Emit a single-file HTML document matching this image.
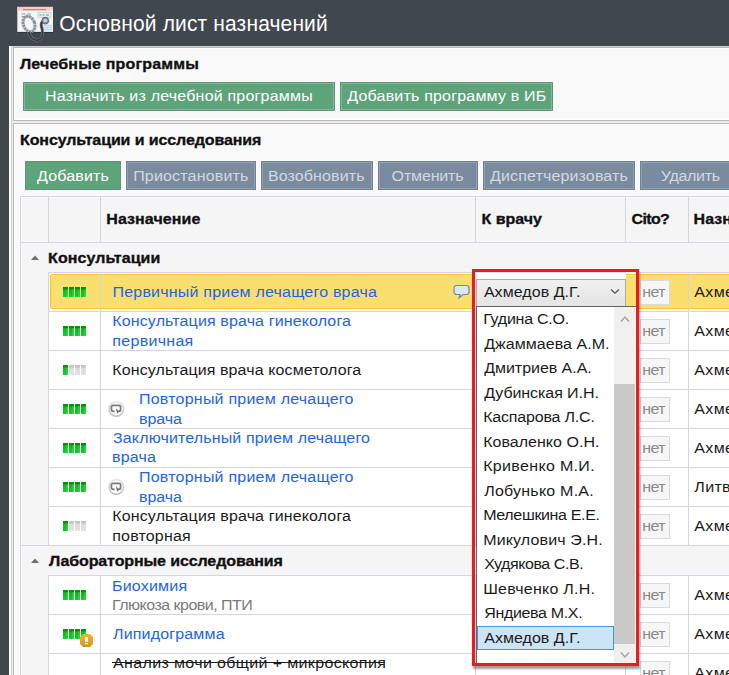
<!DOCTYPE html>
<html><head><meta charset="utf-8">
<style>
*{box-sizing:border-box;margin:0;padding:0}
html,body{width:729px;height:675px;overflow:hidden}
body{background:#41474e;position:relative;font-family:"Liberation Sans",sans-serif}
.a{position:absolute}
.t{position:absolute;white-space:nowrap;line-height:20px;font-family:"Liberation Sans",sans-serif;transform:scaleY(0.92);transform-origin:0 15px}
.btn{position:absolute;height:29px;box-shadow:0 0 0 1px #fff}
.g{background:#5fa37b;border:1px solid #579a72;outline:1px solid #fff;outline-offset:0}
.g::after,.s::after{content:"";position:absolute;left:0;top:0;right:0;bottom:0;border:1px solid #80b898}
.ni::after{display:none}
.s{background:#7a8ba0;border:1px solid #6f8098}
.s::after{border-color:#909fb2}
.hl{position:absolute;height:1px;background:#d5d5e1}
.vl{position:absolute;width:1px;background:#d5d5e1}
.bars{position:absolute;width:23px;height:10px}
.bar{position:absolute;top:0;width:5px;height:10px}
.on{background:linear-gradient(#078f0d 0,#078f0d 2px,#0dbb1d 3px,#0dd02a 100%)}
.on::after{content:"";position:absolute;right:0;top:2px;width:2px;height:8px;background:rgba(255,255,255,.12)}
.off{background:linear-gradient(#c4c4c4 0,#c4c4c4 2px,#dcdcdc 3px,#e2e2e2 100%)}
.net{position:absolute;left:640px;width:30px;height:25px;background:#f6f6f6;border:1px solid #dadada}
</style></head><body>

<!-- title icon -->
<svg class="a" style="left:14px;top:4px" width="42" height="40" viewBox="0 0 42 40">
  <rect x="3.3" y="27.5" width="35.7" height="1.6" fill="#2a2f34" opacity="0.7"/>
  <rect x="3.3" y="2.9" width="35.7" height="25" fill="#f2f4f6"/>
  <rect x="3.3" y="2.9" width="35.7" height="3.8" fill="#f8cbc6"/>
  <rect x="9" y="5.2" width="23" height="1" fill="#b07a72"/>
  <rect x="24" y="8.3" width="13" height="5" fill="#eceef0" stroke="#c2c6ca" stroke-width="0.7"/>
  <path d="M25.5 11 h2 M28.5 11 h2 M32 11 h3" stroke="#6a7076" stroke-width="0.8"/>
  <path d="M7.5 10 h4 M13 10 h4 M7.5 12.5 h9" stroke="#8f959b" stroke-width="0.9"/>
  <rect x="28" y="20.7" width="10" height="5.8" fill="#c4d8ec"/>
  <path d="M28.5 22.5 h9 M28.5 24.5 h9" stroke="#e8f0f8" stroke-width="0.7"/>
  <ellipse cx="15" cy="20" rx="5.6" ry="8" transform="rotate(-22 15 20)" fill="none" stroke="#8a939b" stroke-width="3" stroke-dasharray="2.4 0.5"/>
  <path d="M14.8 28 C16 35, 22 37.5, 25.5 35.5 C30 33.5, 28.5 25.5, 27.2 21.5 C27 19, 28.8 17.2, 31 16.8" fill="none" stroke="#6c7277" stroke-width="3"/><path d="M14.8 28 C16 35, 22 37.5, 25.5 35.5 C30 33.5, 28.5 25.5, 27.2 21.5 C27 19, 28.8 17.2, 31 16.8" fill="none" stroke="#33383d" stroke-width="1.6"/>
  <circle cx="31.3" cy="16.6" r="3.4" fill="#8c98a3" stroke="#505961" stroke-width="0.9"/>
  <circle cx="31.3" cy="16.6" r="1.5" fill="#d0dae3"/>
</svg>

<!-- frame -->
<div class="a" style="left:9px;top:46px;width:720px;height:629px;background:#f9f9f9"></div>
<div class="a" style="left:9px;top:46px;width:2px;height:629px;background:#fdfdfd"></div>
<div class="a" style="left:11px;top:46px;width:718px;height:1px;background:#d2d3d5"></div>
<div class="a" style="left:11px;top:46px;width:1px;height:629px;background:#d2d2d2"></div>
<div class="a" style="left:12px;top:47px;width:1px;height:628px;background:#eaeaea"></div>
<!-- section 1 -->
<div class="a" style="left:13px;top:47px;width:720px;height:74px;border:1px solid #b8b8b8;border-right:none;background:#f9f9f9;box-shadow:inset 1px 1px 0 #fff,inset 0 -1px 0 #fdfdfd"></div>
<div class="a" style="left:13px;top:121px;width:716px;height:2px;background:#ececec"></div>
<!-- section 2 -->
<div class="a" style="left:13px;top:123px;width:720px;height:560px;border:1px solid #b8b8b8;border-right:none;background:#f9f9f9;box-shadow:inset 1px 1px 0 #fff"></div>

<!-- buttons -->
<div class="btn g" style="left:23px;top:82px;width:312px"></div>
<div class="btn g" style="left:340px;top:82px;width:213px"></div>
<div class="btn g ni" style="left:25px;top:161px;width:96px"></div>
<div class="btn s" style="left:126px;top:161px;width:130px"></div>
<div class="btn s" style="left:261px;top:161px;width:112px"></div>
<div class="btn s" style="left:378px;top:161px;width:100px"></div>
<div class="btn s" style="left:483px;top:161px;width:152px"></div>
<div class="btn s" style="left:640px;top:161px;width:100px"></div>

<!-- table -->
<div class="a" style="left:19px;top:195px;width:710px;height:480px;background:#fff"></div>
<div class="a" style="left:21px;top:197px;width:708px;height:478px;background:#f5f5f5;box-shadow:inset 1px 1px 0 #fcfcfc"></div>
<div class="hl" style="left:20px;top:196px;width:709px"></div>
<div class="vl" style="left:20px;top:196px;height:479px"></div>
<div class="hl" style="left:20px;top:242px;width:709px"></div>
<div class="vl" style="left:48px;top:196px;height:46px"></div>
<div class="vl" style="left:100px;top:196px;height:46px"></div>
<div class="vl" style="left:475px;top:196px;height:46px"></div>
<div class="vl" style="left:625px;top:196px;height:46px"></div>
<div class="vl" style="left:688px;top:196px;height:46px"></div>

<!-- data rows group 1 -->
<div class="a" style="left:49px;top:273px;width:680px;height:272px;background:#fff"></div>
<div class="hl" style="left:48px;top:272px;width:681px"></div>
<div class="hl" style="left:48px;top:311px;width:681px"></div>
<div class="hl" style="left:48px;top:350px;width:681px"></div>
<div class="hl" style="left:48px;top:389px;width:681px"></div>
<div class="hl" style="left:48px;top:428px;width:681px"></div>
<div class="hl" style="left:48px;top:467px;width:681px"></div>
<div class="hl" style="left:48px;top:506px;width:681px"></div>
<div class="hl" style="left:20px;top:545px;width:709px"></div>
<div class="vl" style="left:48px;top:272px;height:273px"></div>
<!-- group 2 -->
<div class="a" style="left:49px;top:576px;width:680px;height:99px;background:#fff"></div>
<div class="hl" style="left:48px;top:575px;width:681px"></div>
<div class="hl" style="left:48px;top:614px;width:681px"></div>
<div class="hl" style="left:48px;top:653px;width:681px"></div>
<div class="vl" style="left:48px;top:575px;height:100px"></div>

<!-- selected row -->
<div class="a" style="left:50px;top:274px;width:700px;height:35px;background:#f9e06e;border:1px solid #fbc52a;border-radius:2px;box-shadow:inset 0 1px 0 #fae68c,inset 0 -1px 0 #fae68c"></div>

<!-- column lines in data rows -->
<div class="vl" style="left:100px;top:272px;height:273px"></div>
<div class="vl" style="left:475px;top:272px;height:273px"></div>
<div class="vl" style="left:625px;top:272px;height:273px"></div>
<div class="vl" style="left:688px;top:272px;height:273px"></div>
<div class="vl" style="left:100px;top:575px;height:100px"></div>
<div class="vl" style="left:475px;top:575px;height:100px"></div>
<div class="vl" style="left:625px;top:575px;height:100px"></div>
<div class="vl" style="left:688px;top:575px;height:100px"></div>

<!-- group triangles -->
<svg class="a" style="left:31px;top:255px" width="8" height="5"><path d="M0 5 L4 0.5 L8 5 Z" fill="#6e6e6e"/></svg>
<svg class="a" style="left:31px;top:558px" width="8" height="5"><path d="M0 5 L4 0.5 L8 5 Z" fill="#6e6e6e"/></svg>

<div class="bars" style="left:63px;top:287px"><div class="bar on" style="left:0px"></div><div class="bar on" style="left:6px"></div><div class="bar on" style="left:12px"></div><div class="bar on" style="left:18px"></div></div>
<div class="bars" style="left:63px;top:326px"><div class="bar on" style="left:0px"></div><div class="bar on" style="left:6px"></div><div class="bar on" style="left:12px"></div><div class="bar on" style="left:18px"></div></div>
<div class="bars" style="left:63px;top:365px"><div class="bar on" style="left:0px"></div><div class="bar off" style="left:6px"></div><div class="bar off" style="left:12px"></div><div class="bar off" style="left:18px"></div></div>
<div class="bars" style="left:63px;top:404px"><div class="bar on" style="left:0px"></div><div class="bar on" style="left:6px"></div><div class="bar on" style="left:12px"></div><div class="bar on" style="left:18px"></div></div>
<div class="bars" style="left:63px;top:443px"><div class="bar on" style="left:0px"></div><div class="bar on" style="left:6px"></div><div class="bar on" style="left:12px"></div><div class="bar on" style="left:18px"></div></div>
<div class="bars" style="left:63px;top:482px"><div class="bar on" style="left:0px"></div><div class="bar on" style="left:6px"></div><div class="bar on" style="left:12px"></div><div class="bar on" style="left:18px"></div></div>
<div class="bars" style="left:63px;top:521px"><div class="bar on" style="left:0px"></div><div class="bar off" style="left:6px"></div><div class="bar off" style="left:12px"></div><div class="bar off" style="left:18px"></div></div>
<div class="bars" style="left:63px;top:590px"><div class="bar on" style="left:0px"></div><div class="bar on" style="left:6px"></div><div class="bar on" style="left:12px"></div><div class="bar on" style="left:18px"></div></div>
<div class="bars" style="left:63px;top:629px"><div class="bar on" style="left:0px"></div><div class="bar on" style="left:6px"></div><div class="bar on" style="left:12px"></div><div class="bar on" style="left:18px"></div></div>

<!-- row icons -->

<svg class="a" style="left:107px;top:399px" width="18" height="19" viewBox="0 0 18 19"><defs><linearGradient id="rg399" x1="0" y1="0" x2="0" y2="1"><stop offset="0" stop-color="#e2e2e2"/><stop offset="1" stop-color="#bdbdbd"/></linearGradient></defs><circle cx="9.3" cy="10" r="8" fill="url(#rg399)"/><circle cx="9.3" cy="9.8" r="6.6" fill="#fbfbfb"/><path d="M7.6 12.3 H6.1 a1.7 1.7 0 0 1 -1.7 -1.7 V8 a1.7 1.7 0 0 1 1.7 -1.7 H11.9 a1.7 1.7 0 0 1 1.7 1.7 V10.6 a1.7 1.7 0 0 1 -1.7 1.7 H11.6" fill="none" stroke="#7d7d7d" stroke-width="1.8"/><path d="M8.8 9.2 L12.6 12.6 L10.2 14.6 Z" fill="#6f6f6f"/></svg>
<svg class="a" style="left:107px;top:477px" width="18" height="19" viewBox="0 0 18 19"><defs><linearGradient id="rg477" x1="0" y1="0" x2="0" y2="1"><stop offset="0" stop-color="#e2e2e2"/><stop offset="1" stop-color="#bdbdbd"/></linearGradient></defs><circle cx="9.3" cy="10" r="8" fill="url(#rg477)"/><circle cx="9.3" cy="9.8" r="6.6" fill="#fbfbfb"/><path d="M7.6 12.3 H6.1 a1.7 1.7 0 0 1 -1.7 -1.7 V8 a1.7 1.7 0 0 1 1.7 -1.7 H11.9 a1.7 1.7 0 0 1 1.7 1.7 V10.6 a1.7 1.7 0 0 1 -1.7 1.7 H11.6" fill="none" stroke="#7d7d7d" stroke-width="1.8"/><path d="M8.8 9.2 L12.6 12.6 L10.2 14.6 Z" fill="#6f6f6f"/></svg>
<svg class="a" style="left:453px;top:284px" width="17" height="15" viewBox="0 0 17 15"><path d="M3.5 1.5 h10 a2.5 2.5 0 0 1 2.5 2.5 v4 a2.5 2.5 0 0 1 -2.5 2.5 h-3.5 l-4 3.5 l1 -3.5 h-3.5 a2.5 2.5 0 0 1 -2.5 -2.5 v-4 a2.5 2.5 0 0 1 2.5 -2.5z" fill="#dbe7f7" stroke="#6b8bb5" stroke-width="1.2"/></svg>
<svg class="a" style="left:80px;top:634px" width="13" height="13" viewBox="0 0 13 13"><defs><linearGradient id="bg1" x1="0" y1="0" x2="0" y2="1"><stop offset="0" stop-color="#f7b52c"/><stop offset="1" stop-color="#d3941d"/></linearGradient></defs><path d="M3 0 H10 L13 3 V10 L10 13 H3 L0 10 V3Z" fill="url(#bg1)"/><rect x="5" y="3" width="3" height="4.8" fill="#fff"/><rect x="5" y="9" width="3" height="1.2" fill="#fff"/></svg>


<!-- net boxes -->
<div class="net" style="top:280px"></div>
<div class="net" style="top:319px"></div>
<div class="net" style="top:358px"></div>
<div class="net" style="top:397px"></div>
<div class="net" style="top:436px"></div>
<div class="net" style="top:475px"></div>
<div class="net" style="top:514px"></div>
<div class="net" style="top:583px"></div>
<div class="net" style="top:622px"></div>
<div class="net" style="top:661px"></div>

<!-- red box + combobox -->
<div class="a" style="left:472px;top:269px;width:167px;height:397px;border:3px solid #ec1a22;box-shadow:1px 3px 2px rgba(0,0,0,.38)"></div>
<div class="a" style="left:475px;top:272px;width:151px;height:34px;background:#fff;box-shadow:inset 1px 1px 0 #d6e6f2"></div>
<div class="a" style="left:626px;top:272px;width:10px;height:2px;background:#fff"></div>
<div class="a" style="left:476px;top:279px;width:150px;height:27px;border:1px solid #acacac;border-bottom:none;background:linear-gradient(#f0f0f0,#e4e4e4)"></div>
<svg class="a" style="left:610px;top:288px" width="10" height="7"><path d="M1 1.5 L5 5.2 L9 1.5" fill="none" stroke="#555" stroke-width="1.3"/></svg>
<div class="a" style="left:476px;top:306px;width:160px;height:357px;background:#fff;border-left:1px solid #646464;border-top:1px solid #646464"></div>
<div class="a" style="left:614px;top:307px;width:21px;height:356px;background:#f0f0f0"></div>
<div class="a" style="left:614px;top:384px;width:21px;height:260px;background:#c9c9c9"></div>
<svg class="a" style="left:620px;top:314px" width="10" height="9"><path d="M1 7.5 L5 3 L9 7.5" fill="none" stroke="#a3a3a3" stroke-width="1.4"/></svg>
<svg class="a" style="left:620px;top:651px" width="10" height="9"><path d="M1 1.5 L5 6 L9 1.5" fill="none" stroke="#a3a3a3" stroke-width="1.4"/></svg>
<div class="a" style="left:477px;top:626px;width:137px;height:24px;background:#cce4f7;border:1px solid #3c9ad8"></div>
<div class="a" style="left:472px;top:269px;width:167px;height:397px;border:3px solid #ec1a22"></div>

<div class="t" style="left:59.30px;top:14px;font-size:21px;font-weight:normal;color:#ffffff;letter-spacing:0.140px;transform:scaleY(1.07);transform-origin:0 17px;">Основной лист назначений</div>
<div class="t" style="left:19.90px;top:54px;font-size:16px;font-weight:bold;color:#111;letter-spacing:0.172px;-webkit-text-stroke:0.35px currentColor;">Лечебные программы</div>
<div class="t" style="left:45.00px;top:86px;font-size:16px;font-weight:normal;color:#ffffff;letter-spacing:0.199px;">Назначить из лечебной программы</div>
<div class="t" style="left:347.30px;top:86px;font-size:16px;font-weight:normal;color:#ffffff;letter-spacing:0.190px;">Добавить программу в ИБ</div>
<div class="t" style="left:20.00px;top:130px;font-size:16px;font-weight:bold;color:#111;letter-spacing:-0.107px;-webkit-text-stroke:0.35px currentColor;">Консультации и исследования</div>
<div class="t" style="left:37.10px;top:166px;font-size:16px;font-weight:normal;color:#ffffff;letter-spacing:0.146px;">Добавить</div>
<div class="t" style="left:133.20px;top:166px;font-size:16px;font-weight:normal;color:#d3d8de;letter-spacing:0.168px;">Приостановить</div>
<div class="t" style="left:267.90px;top:166px;font-size:16px;font-weight:normal;color:#d3d8de;letter-spacing:0.119px;">Возобновить</div>
<div class="t" style="left:391.60px;top:166px;font-size:16px;font-weight:normal;color:#d3d8de;letter-spacing:-0.153px;">Отменить</div>
<div class="t" style="left:490.00px;top:166px;font-size:16px;font-weight:normal;color:#d3d8de;letter-spacing:0.136px;">Диспетчеризовать</div>
<div class="t" style="left:660.80px;top:166px;font-size:16px;font-weight:normal;color:#d3d8de;letter-spacing:-0.308px;">Удалить</div>
<div class="t" style="left:106.30px;top:209px;font-size:16px;font-weight:bold;color:#111;letter-spacing:0.072px;-webkit-text-stroke:0.35px currentColor;">Назначение</div>
<div class="t" style="left:481.40px;top:209px;font-size:16px;font-weight:bold;color:#111;letter-spacing:0.015px;-webkit-text-stroke:0.35px currentColor;">К врачу</div>
<div class="t" style="left:631.60px;top:209px;font-size:16px;font-weight:bold;color:#111;letter-spacing:-0.675px;-webkit-text-stroke:0.35px currentColor;">Cito?</div>
<div class="t" style="left:693.50px;top:209px;font-size:16px;font-weight:bold;color:#111;letter-spacing:0.072px;-webkit-text-stroke:0.35px currentColor;">Назначение</div>
<div class="t" style="left:48.10px;top:248px;font-size:16px;font-weight:bold;color:#111;letter-spacing:0.056px;-webkit-text-stroke:0.35px currentColor;">Консультации</div>
<div class="t" style="left:48.90px;top:551px;font-size:16px;font-weight:bold;color:#111;letter-spacing:-0.106px;-webkit-text-stroke:0.35px currentColor;">Лабораторные исследования</div>
<div class="t" style="left:112.50px;top:282px;font-size:16px;font-weight:normal;color:#1d64e8;letter-spacing:0.205px;">Первичный прием лечащего врача</div>
<div class="t" style="left:112.30px;top:311px;font-size:16px;font-weight:normal;color:#1d64e8;letter-spacing:0.127px;">Консультация врача гинеколога</div>
<div class="t" style="left:112.30px;top:331px;font-size:16px;font-weight:normal;color:#1d64e8;letter-spacing:0.291px;">первичная</div>
<div class="t" style="left:112.30px;top:360px;font-size:16px;font-weight:normal;color:#1b1b1b;letter-spacing:0.102px;">Консультация врача косметолога</div>
<div class="t" style="left:139.00px;top:389px;font-size:16px;font-weight:normal;color:#1d64e8;letter-spacing:0.224px;">Повторный прием лечащего</div>
<div class="t" style="left:139.00px;top:409px;font-size:16px;font-weight:normal;color:#1d64e8;letter-spacing:-0.070px;">врача</div>
<div class="t" style="left:113.00px;top:428px;font-size:16px;font-weight:normal;color:#1d64e8;letter-spacing:0.141px;">Заключительный прием лечащего</div>
<div class="t" style="left:112.00px;top:447px;font-size:16px;font-weight:normal;color:#1d64e8;letter-spacing:0.180px;">врача</div>
<div class="t" style="left:139.00px;top:467px;font-size:16px;font-weight:normal;color:#1d64e8;letter-spacing:0.224px;">Повторный прием лечащего</div>
<div class="t" style="left:139.00px;top:487px;font-size:16px;font-weight:normal;color:#1d64e8;letter-spacing:-0.070px;">врача</div>
<div class="t" style="left:112.30px;top:506px;font-size:16px;font-weight:normal;color:#1b1b1b;letter-spacing:0.127px;">Консультация врача гинеколога</div>
<div class="t" style="left:112.30px;top:526px;font-size:16px;font-weight:normal;color:#1b1b1b;letter-spacing:0.164px;">повторная</div>
<div class="t" style="left:112.00px;top:576px;font-size:16px;font-weight:normal;color:#1d64e8;letter-spacing:0.196px;">Биохимия</div>
<div class="t" style="left:112.00px;top:595px;font-size:16px;font-weight:normal;color:#7a7a7a;letter-spacing:-0.516px;">Глюкоза крови, ПТИ</div>
<div class="t" style="left:113.00px;top:624px;font-size:16px;font-weight:normal;color:#1d64e8;letter-spacing:0.163px;">Липидограмма</div>
<div class="t" style="left:113.00px;top:653px;font-size:16px;font-weight:normal;color:#1b1b1b;letter-spacing:0.357px;">Анализ мочи общий + микроскопия</div>
<div class="t" style="left:483.90px;top:282px;font-size:16px;font-weight:normal;color:#1b1b1b;letter-spacing:0.055px;">Ахмедов Д.Г.</div>
<div class="t" style="left:483.20px;top:309px;font-size:16px;font-weight:normal;color:#1b1b1b;letter-spacing:-0.236px;">Гудина С.О.</div>
<div class="t" style="left:484.20px;top:334px;font-size:16px;font-weight:normal;color:#1b1b1b;letter-spacing:0.043px;">Джаммаева А.М.</div>
<div class="t" style="left:484.20px;top:358px;font-size:16px;font-weight:normal;color:#1b1b1b;letter-spacing:-0.039px;">Дмитриев А.А.</div>
<div class="t" style="left:484.20px;top:383px;font-size:16px;font-weight:normal;color:#1b1b1b;letter-spacing:-0.074px;">Дубинская И.Н.</div>
<div class="t" style="left:483.20px;top:407px;font-size:16px;font-weight:normal;color:#1b1b1b;letter-spacing:-0.188px;">Каспарова Л.С.</div>
<div class="t" style="left:483.20px;top:432px;font-size:16px;font-weight:normal;color:#1b1b1b;letter-spacing:0.025px;">Коваленко О.Н.</div>
<div class="t" style="left:483.20px;top:456px;font-size:16px;font-weight:normal;color:#1b1b1b;letter-spacing:0.333px;">Кривенко М.И.</div>
<div class="t" style="left:484.20px;top:481px;font-size:16px;font-weight:normal;color:#1b1b1b;letter-spacing:0.221px;">Лобунько М.А.</div>
<div class="t" style="left:483.20px;top:505px;font-size:16px;font-weight:normal;color:#1b1b1b;letter-spacing:-0.350px;">Мелешкина Е.Е.</div>
<div class="t" style="left:483.20px;top:530px;font-size:16px;font-weight:normal;color:#1b1b1b;letter-spacing:0.136px;">Микулович Э.Н.</div>
<div class="t" style="left:484.20px;top:554px;font-size:16px;font-weight:normal;color:#1b1b1b;letter-spacing:-0.434px;">Худякова С.В.</div>
<div class="t" style="left:483.20px;top:579px;font-size:16px;font-weight:normal;color:#1b1b1b;letter-spacing:0.239px;">Шевченко Л.Н.</div>
<div class="t" style="left:484.20px;top:603px;font-size:16px;font-weight:normal;color:#1b1b1b;letter-spacing:-0.334px;">Яндиева М.Х.</div>
<div class="t" style="left:484.20px;top:628px;font-size:16px;font-weight:normal;color:#1b1b1b;letter-spacing:0.028px;">Ахмедов Д.Г.</div>
<div class="t" style="left:694.30px;top:282px;font-size:16px;font-weight:normal;color:#1b1b1b;letter-spacing:0.350px;">Ахмедов Д.Г.</div>
<div class="t" style="left:694.30px;top:321px;font-size:16px;font-weight:normal;color:#1b1b1b;letter-spacing:0.350px;">Ахмедов Д.Г.</div>
<div class="t" style="left:694.30px;top:360px;font-size:16px;font-weight:normal;color:#1b1b1b;letter-spacing:0.350px;">Ахмедов Д.Г.</div>
<div class="t" style="left:694.30px;top:399px;font-size:16px;font-weight:normal;color:#1b1b1b;letter-spacing:0.350px;">Ахмедов Д.Г.</div>
<div class="t" style="left:694.30px;top:438px;font-size:16px;font-weight:normal;color:#1b1b1b;letter-spacing:0.350px;">Ахмедов Д.Г.</div>
<div class="t" style="left:694.30px;top:477px;font-size:16px;font-weight:normal;color:#1b1b1b;letter-spacing:0.350px;">Литвинова А.А.</div>
<div class="t" style="left:694.30px;top:516px;font-size:16px;font-weight:normal;color:#1b1b1b;letter-spacing:0.350px;">Ахмедов Д.Г.</div>
<div class="t" style="left:694.30px;top:585px;font-size:16px;font-weight:normal;color:#1b1b1b;letter-spacing:0.350px;">Ахмедов Д.Г.</div>
<div class="t" style="left:694.30px;top:624px;font-size:16px;font-weight:normal;color:#1b1b1b;letter-spacing:0.350px;">Ахмедов Д.Г.</div>
<div class="t" style="left:694.30px;top:663px;font-size:16px;font-weight:normal;color:#1b1b1b;letter-spacing:0.350px;">Ахмедов Д.Г.</div>
<div class="t" style="left:642.30px;top:321px;font-size:16px;font-weight:normal;color:#8a8a8a;letter-spacing:-0.602px;">нет</div>
<div class="t" style="left:642.30px;top:360px;font-size:16px;font-weight:normal;color:#8a8a8a;letter-spacing:-0.602px;">нет</div>
<div class="t" style="left:642.30px;top:399px;font-size:16px;font-weight:normal;color:#8a8a8a;letter-spacing:-0.602px;">нет</div>
<div class="t" style="left:642.30px;top:438px;font-size:16px;font-weight:normal;color:#8a8a8a;letter-spacing:-0.602px;">нет</div>
<div class="t" style="left:642.30px;top:477px;font-size:16px;font-weight:normal;color:#8a8a8a;letter-spacing:-0.602px;">нет</div>
<div class="t" style="left:642.30px;top:516px;font-size:16px;font-weight:normal;color:#8a8a8a;letter-spacing:-0.602px;">нет</div>
<div class="t" style="left:642.30px;top:585px;font-size:16px;font-weight:normal;color:#8a8a8a;letter-spacing:-0.602px;">нет</div>
<div class="t" style="left:642.30px;top:624px;font-size:16px;font-weight:normal;color:#8a8a8a;letter-spacing:-0.602px;">нет</div>
<div class="t" style="left:642.30px;top:663px;font-size:16px;font-weight:normal;color:#8a8a8a;letter-spacing:-0.602px;">нет</div>
<div class="t" style="left:642.30px;top:282px;font-size:16px;font-weight:normal;color:#8a8a8a;letter-spacing:-0.602px;">нет</div>
<div class="a" style="left:112px;top:662px;width:273px;height:1px;background:#1b1b1b"></div>
</body></html>
